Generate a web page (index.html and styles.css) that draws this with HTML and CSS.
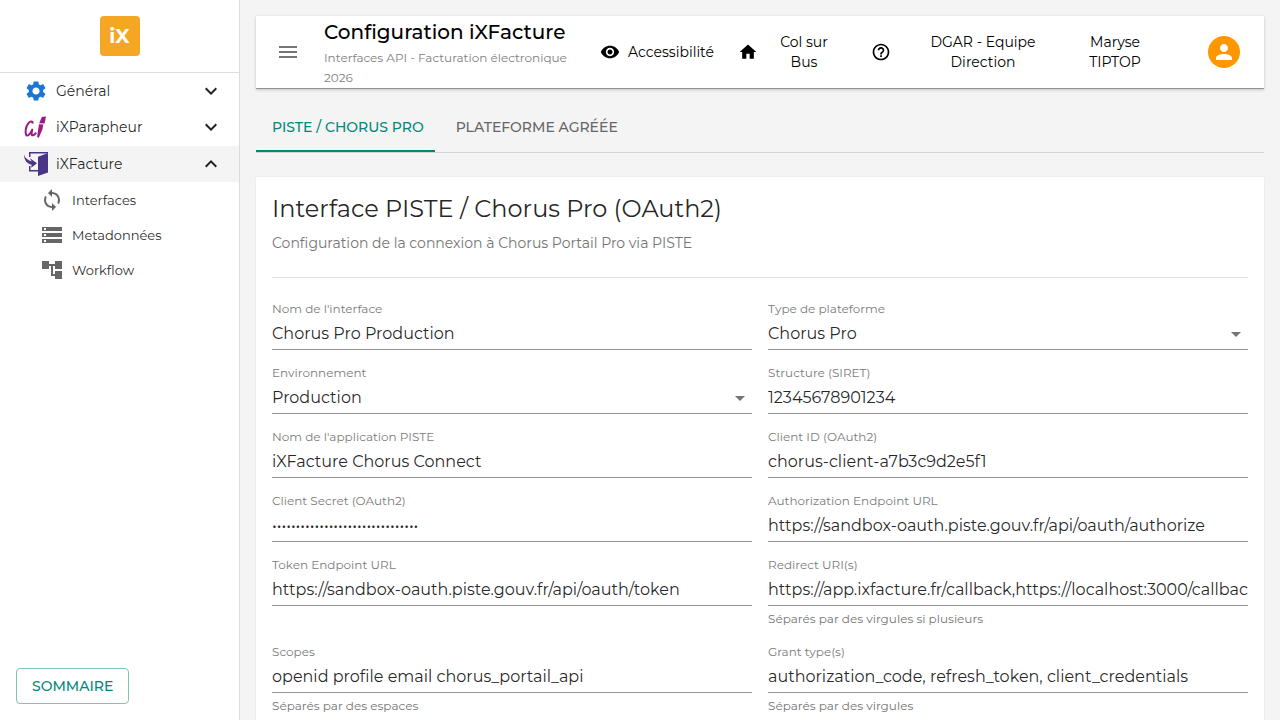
FILE: index.html
```html
<!DOCTYPE html>
<html lang="fr">
<head>
<meta charset="utf-8">
<meta name="viewport" content="width=device-width, initial-scale=1">
<title>Configuration iXFacture</title>
<link rel="stylesheet" href="styles.css">
</head>
<body>
<div class="app">
  <aside class="sidebar">
    <div class="brand"><div class="logo">iX</div></div>
    <nav class="nav" aria-label="Menu principal">
      <button class="nav-item" type="button" aria-expanded="false">
        <svg class="icon gear" viewBox="0 0 24 24"><path d="M19.14 12.94c.04-.3.06-.61.06-.94 0-.32-.02-.64-.07-.94l2.03-1.58c.18-.14.23-.41.12-.61l-1.92-3.32c-.12-.22-.37-.29-.59-.22l-2.39.96c-.5-.38-1.03-.7-1.62-.94l-.36-2.54c-.04-.24-.24-.41-.48-.41h-3.84c-.24 0-.43.17-.47.41l-.36 2.54c-.59.24-1.13.57-1.62.94l-2.39-.96c-.22-.08-.47 0-.59.22L2.74 8.87c-.12.21-.08.47.12.61l2.03 1.58c-.05.3-.09.63-.09.94s.02.64.07.94l-2.03 1.58c-.18.14-.23.41-.12.61l1.92 3.32c.12.22.37.29.59.22l2.39-.96c.5.38 1.03.7 1.62.94l.36 2.54c.05.24.24.41.48.41h3.84c.24 0 .44-.17.47-.41l.36-2.54c.59-.24 1.13-.56 1.62-.94l2.39.96c.22.08.47 0 .59-.22l1.92-3.32c.12-.22.07-.47-.12-.61l-2.01-1.58zM12 15.6c-1.98 0-3.6-1.62-3.6-3.6s1.62-3.6 3.6-3.6 3.6 1.62 3.6 3.6-1.62 3.6-3.6 3.6z"/></svg>
        <span class="nav-label">Général</span>
        <svg class="icon" viewBox="0 0 24 24"><path d="M16.59 8.59 12 13.17 7.41 8.59 6 10l6 6 6-6z"/></svg>
      </button>
      <button class="nav-item" type="button" aria-expanded="false">
        <svg class="icon sign" viewBox="0 0 24 24"><path class="stroke" d="M8.600 8.500C8.800 6.200 6.500 5.800 4.300 8.300C1.800 11.500 1 16.500 2 19.500C3.300 22.500 6.300 19 8.300 14.600C7.200 18.500 7.400 20.800 9 20.300C10.600 19.800 11.200 18.800 12.200 17.600"/><path d="M17.800 2 22 1.500 20.600 8.600 15.200 8.300zM15 9.300l4.300.3-.9 5-3.600 8.200-1.700-.8.800-5.500z"/></svg>
        <span class="nav-label">iXParapheur</span>
        <svg class="icon" viewBox="0 0 24 24"><path d="M16.59 8.59 12 13.17 7.41 8.59 6 10l6 6 6-6z"/></svg>
      </button>
      <button class="nav-item active" type="button" aria-expanded="true">
        <svg class="icon door" viewBox="0 0 24 24"><path d="M5 0h19v1.500H6.500V5H5zM5 14h1.500v4H14v1.500H5z"/><path d="M14 4.800 24 1v19.500L14 24z"/><path d="M0 2.500C1 6 3.500 8.300 7.600 9.400L6 6.200 13 11.200 7.200 15.800 7.600 12.800C3 11.500.2 8.500 0 2.500z"/></svg>
        <span class="nav-label">iXFacture</span>
        <svg class="icon" viewBox="0 0 24 24"><path d="m12 8-6 6 1.410 1.410L12 10.830l4.590 4.580L18 14z"/></svg>
      </button>
      <a class="sub-item" href="#interfaces">
        <svg class="icon" viewBox="0 0 24 24"><path d="M12 4V1L8 5l4 4V6c3.310 0 6 2.690 6 6 0 1.010-.25 1.970-.7 2.800l1.460 1.460C19.540 15.030 20 13.570 20 12c0-4.420-3.580-8-8-8zm0 14c-3.310 0-6-2.690-6-6 0-1.010.25-1.970.7-2.800L5.240 7.740C4.460 8.970 4 10.430 4 12c0 4.420 3.580 8 8 8v3l4-4-4-4v3z"/></svg>
        <span>Interfaces</span>
      </a>
      <a class="sub-item" href="#metadonnees">
        <svg class="icon" viewBox="0 0 24 24"><path d="M2 20h20v-4H2v4zm2-3h2v2H4v-2zM2 4v4h20V4H2zm4 3H4V5h2v2zm-4 7h20v-4H2v4zm2-3h2v2H4v-2z"/></svg>
        <span>Metadonnées</span>
      </a>
      <a class="sub-item" href="#workflow">
        <svg class="icon" viewBox="0 0 24 24"><path d="M22 11V3h-7v3H9V3H2v8h7V8h2v10h4v3h7v-8h-7v3h-2V8h2v3z"/></svg>
        <span>Workflow</span>
      </a>
    </nav>
    <button class="summary" type="button">SOMMAIRE</button>
  </aside>

  <main class="main">
    <header class="topbar">
      <button class="icon-button" type="button" aria-label="Ouvrir le menu">
        <svg class="icon" viewBox="0 0 24 24"><path d="M3 18h18v-2H3v2zm0-5h18v-2H3v2zm0-7v2h18V6H3z"/></svg>
      </button>
      <div class="heading">
        <h1>Configuration iXFacture</h1>
        <p>Interfaces API - Facturation électronique 2026</p>
      </div>
      <button class="tool" type="button">
        <svg class="icon-s" viewBox="0 0 24 24"><path d="M12 4.500C7 4.500 2.730 7.610 1 12c1.730 4.390 6 7.500 11 7.500s9.270-3.110 11-7.500c-1.730-4.390-6-7.500-11-7.500zM12 17c-2.760 0-5-2.240-5-5s2.240-5 5-5 5 2.240 5 5-2.240 5-5 5zm0-8c-1.660 0-3 1.340-3 3s1.340 3 3 3 3-1.340 3-3-1.340-3-3-3z"/></svg>
        <span>Accessibilité</span>
      </button>
      <button class="tool home" type="button">
        <svg class="icon-s" viewBox="0 0 24 24"><path d="M10 20v-6h4v6h5v-8h3L12 3 2 12h3v8z"/></svg>
        <span>Col sur Bus</span>
      </button>
      <button class="tool help" type="button" aria-label="Aide">
        <svg class="icon-s" viewBox="0 0 24 24"><path d="M11 18h2v-2h-2v2zm1-16C6.480 2 2 6.480 2 12s4.480 10 10 10 10-4.480 10-10S17.520 2 12 2zm0 18c-4.410 0-8-3.590-8-8s3.590-8 8-8 8 3.590 8 8-3.590 8-8 8zm0-14c-2.210 0-4 1.790-4 4h2c0-1.100.9-2 2-2s2 .9 2 2c0 2-3 1.750-3 5h2c0-2.250 3-2.500 3-5 0-2.210-1.790-4-4-4z"/></svg>
      </button>
      <div class="team">DGAR - Equipe Direction</div>
      <div class="user">Maryse TIPTOP</div>
      <button class="avatar" type="button" aria-label="Mon compte">
        <svg class="icon" viewBox="0 0 24 24"><path d="M12 12c2.210 0 4-1.790 4-4s-1.790-4-4-4-4 1.790-4 4 1.790 4 4 4zm0 2c-2.670 0-8 1.340-8 4v2h16v-2c0-2.660-5.330-4-8-4z"/></svg>
      </button>
    </header>

    <div class="tabs" role="tablist">
      <button class="tab selected" type="button" role="tab" aria-selected="true">PISTE / CHORUS PRO</button>
      <button class="tab" type="button" role="tab" aria-selected="false">PLATEFORME AGRÉÉE</button>
    </div>

    <section class="card">
      <h2>Interface PISTE / Chorus Pro (OAuth2)</h2>
      <p class="intro">Configuration de la connexion à Chorus Portail Pro via PISTE</p>
      <form class="fields">
        <div class="field">
          <label for="name">Nom de l'interface</label>
          <input id="name" type="text" value="Chorus Pro Production">
        </div>
        <div class="field">
          <label for="platform">Type de plateforme</label>
          <div class="select">
            <select id="platform"><option>Chorus Pro</option></select>
            <svg class="icon caret" viewBox="0 0 24 24"><path d="m7 10 5 5 5-5z"/></svg>
          </div>
        </div>
        <div class="field">
          <label for="env">Environnement</label>
          <div class="select">
            <select id="env"><option>Production</option></select>
            <svg class="icon caret" viewBox="0 0 24 24"><path d="m7 10 5 5 5-5z"/></svg>
          </div>
        </div>
        <div class="field">
          <label for="siret">Structure (SIRET)</label>
          <input id="siret" type="text" value="12345678901234">
        </div>
        <div class="field">
          <label for="app">Nom de l'application PISTE</label>
          <input id="app" type="text" value="iXFacture Chorus Connect">
        </div>
        <div class="field">
          <label for="client">Client ID (OAuth2)</label>
          <input id="client" type="text" value="chorus-client-a7b3c9d2e5f1">
        </div>
        <div class="field">
          <label for="secret">Client Secret (OAuth2)</label>
          <input id="secret" type="password" value="0123456789012345678901234567890" autocomplete="off">
        </div>
        <div class="field">
          <label for="auth">Authorization Endpoint URL</label>
          <input id="auth" type="text" value="https://sandbox-oauth.piste.gouv.fr/api/oauth/authorize">
        </div>
        <div class="field">
          <label for="token">Token Endpoint URL</label>
          <input id="token" type="text" value="https://sandbox-oauth.piste.gouv.fr/api/oauth/token">
        </div>
        <div class="field">
          <label for="redirect">Redirect URI(s)</label>
          <input id="redirect" type="text" value="https://app.ixfacture.fr/callback,https://localhost:3000/callback" aria-describedby="redirect-help">
          <p class="helper" id="redirect-help">Séparés par des virgules si plusieurs</p>
        </div>
        <div class="field">
          <label for="scopes">Scopes</label>
          <input id="scopes" type="text" value="openid profile email chorus_portail_api" aria-describedby="scopes-help">
          <p class="helper" id="scopes-help">Séparés par des espaces</p>
        </div>
        <div class="field">
          <label for="grant">Grant type(s)</label>
          <input id="grant" type="text" value="authorization_code, refresh_token, client_credentials" aria-describedby="grant-help">
          <p class="helper" id="grant-help">Séparés par des virgules</p>
        </div>
      </form>
    </section>
  </main>
</div>
</body>
</html>
```
FILE: styles.css
```css
* { box-sizing: border-box; }

html { scrollbar-width: none; }

body {
  margin: 0;
  background: #f4f4f4;
  color: rgba(0, 0, 0, 0.87);
  font-family: Montserrat, Inter, "Open Sans", sans-serif;
  font-size: 14px;
  line-height: 20px;
}

h1, h2, p { margin: 0; font-weight: 400; }

button, input, select {
  margin: 0;
  padding: 0;
  border: 0;
  background: none;
  color: inherit;
  font: inherit;
}

button { cursor: pointer; }

.icon { width: 24px; height: 24px; flex: none; fill: currentColor; display: block; }
.icon-s { width: 20px; height: 20px; flex: none; fill: currentColor; display: block; }

.app { display: flex; align-items: flex-start; }

/* Sidebar */
.sidebar {
  position: sticky;
  top: 0;
  display: flex;
  flex-direction: column;
  flex: none;
  width: 240px;
  height: 100vh;
  background: #fff;
  border-right: 1px solid #dcdcdc;
}

.brand {
  display: flex;
  justify-content: center;
  padding: 16px;
  border-bottom: 1px solid #dedede;
}

.logo {
  width: 40px;
  border-radius: 4px;
  background: #f5a623;
  color: #fff;
  font-size: 20px;
  font-weight: 700;
  line-height: 40px;
  text-align: center;
}

.nav { flex: 1; }

.nav-item {
  display: flex;
  align-items: center;
  gap: 8px;
  width: 100%;
  height: 36px;
  padding: 0 16px 0 24px;
  text-align: left;
}

.nav-item.active { margin-top: 1px; background: #f4f4f4; }
.nav-label { flex: 1; }
.gear { color: #1976d2; }
.sign { color: #9c1b80; }
.sign .stroke { fill: none; stroke: currentColor; stroke-width: 2; stroke-linejoin: round; }
.door { color: #4a3488; }

.sub-item {
  display: flex;
  align-items: center;
  gap: 8px;
  height: 35px;
  padding: 0 16px 0 40px;
  color: inherit;
  font-size: 13px;
  text-decoration: none;
}

.sub-item .icon { color: #666; }

.summary {
  align-self: flex-start;
  height: 36px;
  margin: 16px;
  padding: 0 15px;
  border: 1px solid #7fc3bb;
  border-radius: 4px;
  color: #00897b;
  font-weight: 500;
}

/* Main column */
.main {
  flex: 1;
  min-width: 0;
  padding: 16px;
}

.topbar {
  display: flex;
  align-items: center;
  min-height: 73px;
  padding: 0 24px 0 20px;
  border-bottom: 1px solid #929292;
  background: #fff;
  box-shadow: 0 1px 3px rgba(0, 0, 0, 0.2);
  color: #000;
}

.icon-button { flex: none; width: 24px; margin-right: 24px; color: #757575; }

.heading { flex: 1; min-width: 0; padding-right: 16px; }
.heading h1 { font-size: 20px; font-weight: 500; line-height: 32px; white-space: nowrap; }
.heading p { color: #808080; font-size: 12px; }

.tool { display: flex; align-items: center; gap: 8px; flex: none; }
.home { gap: 14px; margin-left: 24px; }
.home span { width: 64px; }
.help { margin-left: 35px; }
.team, .user { flex: none; text-align: center; }
.team { width: 112px; margin-left: 36px; }
.user { width: 56px; margin-left: 48px; }

.avatar {
  display: grid;
  place-items: center;
  flex: none;
  width: 32px;
  height: 32px;
  margin-left: 65px;
  border-radius: 50%;
  background: #ff9800;
  color: #fff;
}

.tabs {
  display: flex;
  margin-top: 14px;
  border-bottom: 1px solid #d4d4d4;
}

.tab {
  position: relative;
  height: 49px;
  padding: 0 16px 2px;
  color: #666;
  font-weight: 500;
}

.tab.selected { color: #00897b; }

.tab.selected::after {
  content: "";
  position: absolute;
  left: 0;
  right: 5px;
  bottom: 0;
  height: 2px;
  background: #00897b;
}

/* Card and form */
.card {
  margin-top: 24px;
  padding: 16px;
  background: #fff;
  box-shadow: 0 0 1px rgba(0, 0, 0, 0.15);
}

.card h2 { font-size: 24px; line-height: 32px; }

.intro {
  margin-top: 8px;
  padding-bottom: 24px;
  border-bottom: 1px solid #e0e0e0;
  color: #757575;
}

.fields {
  display: grid;
  grid-template-columns: 1fr 1fr;
  gap: 16px;
  padding-top: 24px;
}

.field { min-width: 0; }

.field label {
  display: block;
  margin-bottom: 2px;
  color: #7b7b7b;
  font-size: 12px;
  line-height: 14px;
}

.field input, .field select {
  display: block;
  width: 100%;
  height: 32px;
  border-bottom: 1px solid #949494;
  border-radius: 0;
  outline: 0;
  font-size: 16px;
}

.field select { appearance: none; }

.select { position: relative; }
.caret { position: absolute; top: 4px; right: 0; color: #757575; pointer-events: none; }

.helper { margin-top: 3px; color: #757575; font-size: 12px; }
```
